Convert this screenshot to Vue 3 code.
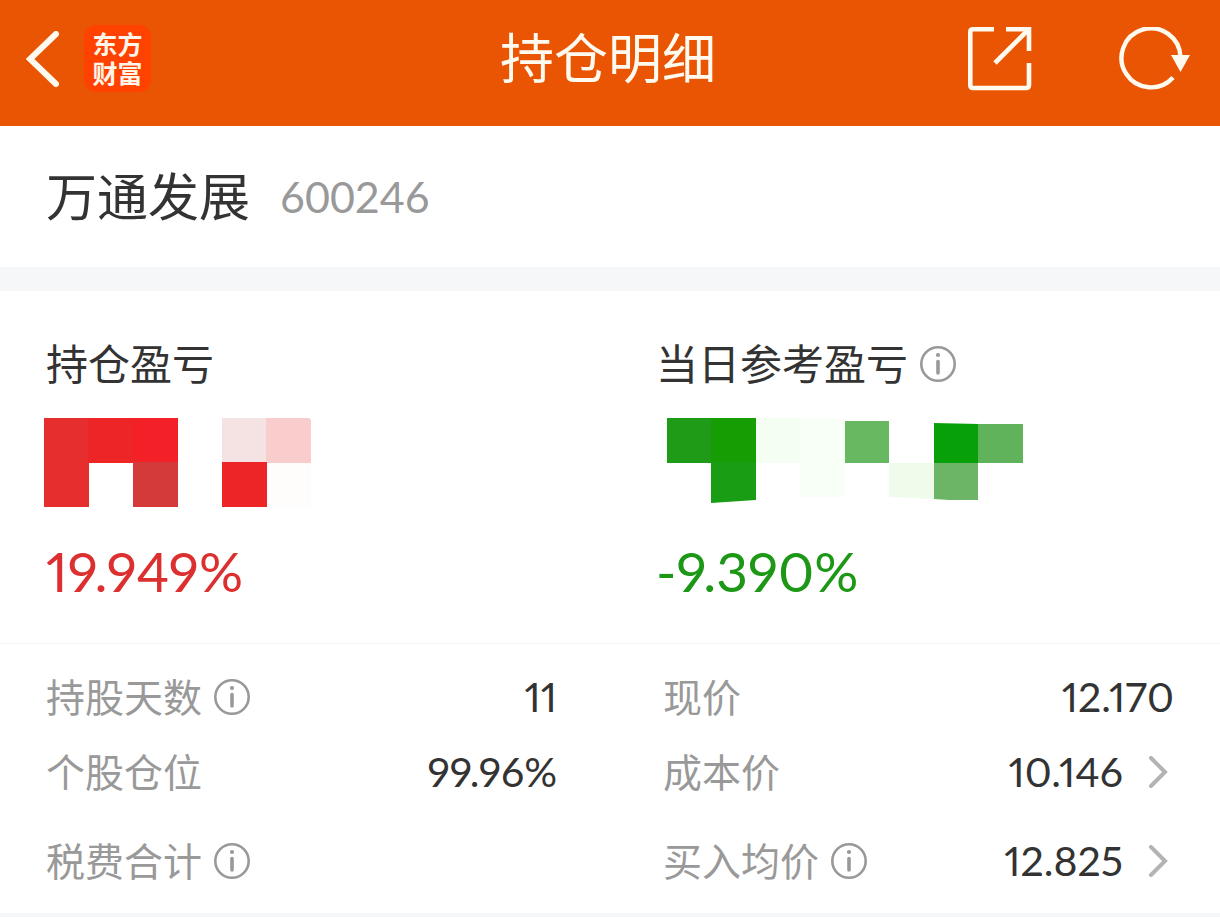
<script setup>
import { ref } from "vue";

const stock = ref({ name: "万通发展", code: "600246" });

// masked amounts, one polygon per block
const profitBlocks = [
  { points: "0,0 45,0 45,89 0,89", fill: "#e52e2d" },
  { points: "44,0 90,0 90,45 44,45", fill: "#ed2526" },
  { points: "89,0 134,0 134,45 89,45", fill: "#f32027" },
  { points: "89,44 134,44 134,89 89,89", fill: "#d53a3b" },
  { points: "178,0 223,0 223,45 178,45", fill: "#f5e3e3" },
  { points: "222,0 265,0 267,2 267,45 222,45", fill: "#facdcd" },
  { points: "178,44 223,44 223,89 178,89", fill: "#ed2526" },
  { points: "223,45 267,45 267,89 223,89", fill: "#fffdfc" },
];

const todayBlocks = [
  { points: "10,0 55,0 55,45 10,45", fill: "#1f9b18" },
  { points: "54,0 99,0 99,45 54,45", fill: "#169d04" },
  { points: "54,44 99,44 99,82 54,85", fill: "#199d14" },
  { points: "99,0 143,0 143,45 99,45", fill: "#f4fef3" },
  { points: "143,0 176,0 188,3 188,79 143,79", fill: "#f8fff7" },
  { points: "188,3 232,3 232,45 188,45", fill: "#67b860" },
  { points: "232,45 277,45 277,81 232,79", fill: "#effcec" },
  { points: "277,5 322,6 322,45 277,45", fill: "#08a008" },
  { points: "321,6 366,6 366,45 321,45", fill: "#60b35a" },
  { points: "277,45 321,45 321,82 292,82 277,81", fill: "#6cb566" },
];

const rows = [
  [
    { label: "持股天数", value: "11", info: true },
    { label: "现价", value: "12.170" },
  ],
  [
    { label: "个股仓位", value: "99.96%" },
    { label: "成本价", value: "10.146", link: true },
  ],
  [
    { label: "税费合计", value: "", info: true },
    { label: "买入均价", value: "12.825", info: true, link: true },
  ],
];
</script>

<template>
  <div class="page">
    <header class="navbar">
      <div class="nav-left">
        <button class="icon-btn" aria-label="返回">
          <svg width="34" height="56" viewBox="0 0 34 56">
            <path d="M30 3 L4 28 L30 53" fill="none" stroke="#fffaf0" stroke-width="6" stroke-linecap="round" />
          </svg>
        </button>
        <div class="logo">
          <span>东方</span>
          <span>财富</span>
        </div>
      </div>
      <h1 class="title">持仓明细</h1>
      <div class="nav-right">
        <button class="icon-btn" aria-label="分享">
          <svg width="64" height="64" viewBox="0 0 64 64">
            <g fill="none" stroke="#fffaf0" stroke-width="4.6">
              <path d="M26 2.3 H5 Q2.3 2.3 2.3 5 V58 Q2.3 61 5 61 H58 Q61 61 61 58 V36" />
              <path d="M38 2.3 H61 V24" />
              <path d="M60 3 L27 36" />
            </g>
          </svg>
        </button>
        <button class="icon-btn" aria-label="刷新">
          <svg width="72" height="64" viewBox="0 0 72 64">
            <path d="M55 50.5 A29.5 29.5 0 1 1 62.5 30" fill="none" stroke="#fffaf0" stroke-width="4.4" />
            <path d="M53 28 H72 L62.5 45 Z" fill="#fffaf0" />
          </svg>
        </button>
      </div>
    </header>

    <section class="stock">
      <h2 class="stock-name">{{ stock.name }}</h2>
      <span class="stock-code">{{ stock.code }}</span>
    </section>

    <section class="summary">
      <div class="profit">
        <h3 class="profit-label">持仓盈亏</h3>
        <svg class="mosaic mosaic-red" width="268" height="90" viewBox="0 0 268 90">
          <polygon v-for="(b, i) in profitBlocks" :key="i" :points="b.points" :fill="b.fill" />
        </svg>
        <div class="percent up">19.949%</div>
      </div>
      <div class="profit">
        <h3 class="profit-label">
          当日参考盈亏
          <button class="icon-btn" aria-label="说明">
            <svg width="36" height="36" viewBox="0 0 36 36">
              <circle cx="18" cy="18" r="16.7" fill="none" stroke="#999" stroke-width="2.6" />
              <circle cx="18" cy="9" r="2.1" fill="#999" />
              <path d="M18 15.5 V27" stroke="#999" stroke-width="3.6" stroke-linecap="round" />
            </svg>
          </button>
        </h3>
        <svg class="mosaic" width="368" height="90" viewBox="-1 0 368 90">
          <polygon v-for="(b, i) in todayBlocks" :key="i" :points="b.points" :fill="b.fill" />
        </svg>
        <div class="percent down">-9.390%</div>
      </div>
    </section>

    <section class="details">
      <div v-for="(row, r) in rows" :key="r" class="row">
        <dl v-for="item in row" :key="item.label" class="cell">
          <dt class="cell-label">
            {{ item.label }}
            <button v-if="item.info" class="icon-btn" aria-label="说明">
              <svg width="36" height="36" viewBox="0 0 36 36">
                <circle cx="18" cy="18" r="16.7" fill="none" stroke="#999" stroke-width="2.6" />
                <circle cx="18" cy="9" r="2.1" fill="#999" />
                <path d="M18 15.5 V27" stroke="#999" stroke-width="3.6" stroke-linecap="round" />
              </svg>
            </button>
          </dt>
          <dd class="cell-value">
            {{ item.value }}
            <button v-if="item.link" class="icon-btn chevron" aria-label="查看">
              <svg width="20" height="32" viewBox="0 0 20 32">
                <path d="M3 2 L17 16 L3 30" fill="none" stroke="#b3b3b3" stroke-width="4" stroke-linecap="round" />
              </svg>
            </button>
          </dd>
        </dl>
      </div>
    </section>
    <div class="divider"></div>
  </div>
</template>

<style>
body {
  margin: 0;
  background: #fff;
}
</style>

<style scoped>
.page {
  display: flex;
  flex-direction: column;
  min-height: 100vh;
  color: #333;
  font-family: Lato, "Noto Sans CJK SC", sans-serif;
  font-variant-numeric: proportional-nums;
}

h1,
h2,
h3,
dl,
dd {
  margin: 0;
  font-weight: 400;
}

.icon-btn {
  display: flex;
  padding: 0;
  border: 0;
  background: none;
  cursor: pointer;
}

.navbar {
  display: grid;
  grid-template-columns: 1fr auto 1fr;
  align-items: center;
  height: 126px;
  padding: 0 30px 9px 26px;
  box-sizing: border-box;
  background: #ea5504;
}

.nav-left {
  display: flex;
  align-items: center;
  gap: 24px;
}

.logo {
  display: flex;
  flex-direction: column;
  align-items: center;
  justify-content: center;
  width: 67px;
  height: 67px;
  border-radius: 12px;
  background: #ff4200;
  color: #fff5e8;
  font-size: 25px;
  font-weight: 700;
  line-height: 29px;
}

.title {
  color: #fffaf0;
  font-size: 54px;
  line-height: 64px;
}

.nav-right {
  display: flex;
  align-items: center;
  justify-content: flex-end;
  gap: 86px;
}

.stock {
  display: flex;
  align-items: center;
  gap: 30px;
  height: 141px;
  padding: 0 46px;
}

.stock-name {
  font-size: 51px;
  line-height: 64px;
}

.stock-code {
  color: #999;
  font-size: 43px;
  font-variant-numeric: tabular-nums;
  line-height: 64px;
}

.summary {
  display: grid;
  grid-template-columns: 1fr 1fr;
  padding: 48px 0 40px;
  border-top: 24px solid #f6f7f9;
  border-bottom: 1px solid #f3f4f5;
}

.profit {
  padding-left: 46px;
}

.profit-label {
  display: flex;
  align-items: center;
  gap: 12px;
  font-size: 42px;
  line-height: 50px;
}

.mosaic {
  display: block;
  margin-top: 29px;
}

.mosaic-red {
  margin-left: -2px;
}

.percent {
  margin-top: 31px;
  font-size: 55px;
  line-height: 64px;
}

.up {
  color: #dc2f2f;
}

.down {
  color: #1c9716;
}

.details {
  padding-top: 15px;
}

.row {
  display: grid;
  grid-template-columns: 1fr 1fr;
  height: 75px;
}

.row:last-child {
  height: 104px;
}

.cell {
  display: flex;
  align-items: center;
  justify-content: space-between;
  padding: 0 53px 0 46px;
}

.cell:last-child {
  padding: 0 46px 0 53px;
}

.cell-label {
  display: flex;
  align-items: center;
  gap: 12px;
  color: #999;
  font-size: 39px;
  line-height: 48px;
}

.cell-value {
  display: flex;
  align-items: center;
  gap: 25px;
  font-size: 41px;
  line-height: 48px;
}

.chevron {
  padding-right: 6px;
}

.divider {
  flex: 1;
  background: #f6f7f9;
}
</style>
